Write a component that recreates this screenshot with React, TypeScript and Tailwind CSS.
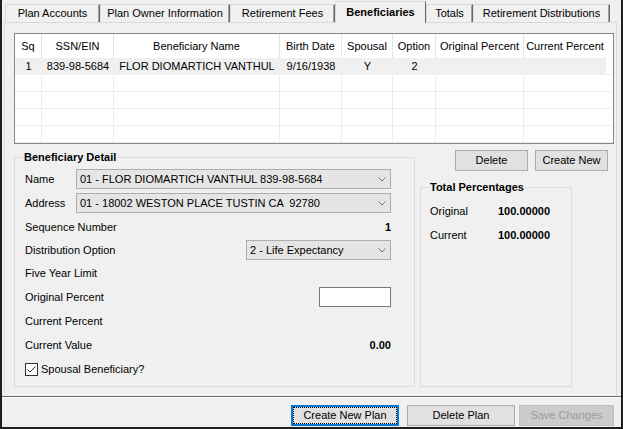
import React from 'react';

const tabs = [
  { label: 'Plan Accounts', cls: 'w-[95px]' },
  { label: 'Plan Owner Information', cls: 'w-[130px]' },
  { label: 'Retirement Fees', cls: 'w-[105px]' },
  { label: 'Beneficiaries', cls: 'w-[91px]', active: true },
  { label: 'Totals', cls: 'w-[47px]' },
  { label: 'Retirement Distributions', cls: 'w-[137px]' },
];

const columns = [
  { label: 'Sq', cls: 'w-[27px]' },
  { label: 'SSN/EIN', cls: 'w-[72px]' },
  { label: 'Beneficiary Name', cls: 'w-[166px]' },
  { label: 'Birth Date', cls: 'w-[62px]' },
  { label: 'Spousal', cls: 'w-[51px]' },
  { label: 'Option', cls: 'w-[43px]' },
  { label: 'Original Percent', cls: 'w-[88px]' },
  { label: 'Current Percent', cls: 'w-[82px]' },
];

const firstRow = ['1', '839-98-5684', 'FLOR DIOMARTICH VANTHUL', '9/16/1938', 'Y', '2', '', ''];

const Chevron = () => (
  <svg width="8" height="5" viewBox="0 0 8 5" className="shrink-0">
    <polyline points="0.5,0.5 4,4 7.5,0.5" fill="none" stroke="#707070" strokeWidth="1" />
  </svg>
);

const Combo = ({ text, cls }: { text: string; cls: string }) => (
  <div className={`${cls} h-[20px] flex items-center justify-between border border-[#adadad] bg-[#e5e5e5] pl-[3px] pr-[4px]`}>
    <span className="whitespace-pre">{text}</span>
    <Chevron />
  </div>
);

const TabStrip = () => (
  <div className="h-[22px] flex items-end pl-[3px]">
    {tabs.map((t) =>
      t.active ? (
        <div
          key={t.label}
          className={`${t.cls} relative z-10 -mb-px h-[22px] flex items-center justify-center pb-[1px] bg-[#f0f0f0] border-t border-l border-[#dadada] border-r border-r-[#696969] font-bold`}
        >
          {t.label}
        </div>
      ) : (
        <div
          key={t.label}
          className={`${t.cls} h-[18px] flex items-center justify-center bg-[#f0f0f0] border-t border-l border-[#dadada] border-r border-r-[#696969] shadow-[inset_-1px_0_0_#a0a0a0]`}
        >
          {t.label}
        </div>
      )
    )}
  </div>
);

const Grid = () => (
  <div className="ml-[9px] mt-[10px] w-[600px] h-[111px] border border-[#828790] bg-white overflow-hidden">
    <div className="h-[24px] flex">
      {columns.map((c, i) => (
        <div
          key={c.label}
          className={`${c.cls} h-full flex items-center justify-center ${i < columns.length - 1 ? 'border-r border-[#e5e5e5]' : ''}`}
        >
          {c.label}
        </div>
      ))}
    </div>
    <div className="h-[17px] flex">
      {columns.map((c, i) => (
        <div key={c.label} className={`${c.cls} h-full flex items-center justify-center bg-[#f0f0f0] whitespace-pre`}>
          {firstRow[i]}
        </div>
      ))}
      <div className="flex-1 h-full border-b border-[#ededed]" />
    </div>
    {[0, 1, 2, 3].map((r) => (
      <div key={r} className="h-[17px] flex">
        {columns.map((c, i) => (
          <div
            key={c.label}
            className={`${c.cls} h-full border-b border-[#ededed] ${i < columns.length - 1 ? 'border-r' : ''}`}
          />
        ))}
        <div className="flex-1 h-full border-b border-[#ededed]" />
      </div>
    ))}
  </div>
);

const Row = ({ h, children }: { h: string; children: React.ReactNode }) => (
  <div className={`${h} flex items-center justify-between`}>{children}</div>
);

const BeneficiaryDetail = () => (
  <fieldset className="mt-[7px] w-[401px] h-[236px] border border-[#dcdcdc] pl-[10px] pr-[23px] pt-[3px]">
    <legend className="-ml-[2px] px-[1px] font-bold">Beneficiary Detail</legend>
    <Row h="h-[24px]">
      <span className="w-[51px]">Name</span>
      <Combo text="01 - FLOR DIOMARTICH VANTHUL 839-98-5684" cls="flex-1" />
    </Row>
    <Row h="h-[24px]">
      <span className="w-[51px]">Address</span>
      <Combo text="01 - 18002 WESTON PLACE TUSTIN CA  92780" cls="flex-1" />
    </Row>
    <Row h="h-[24px]">
      <span>Sequence Number</span>
      <span className="font-bold">1</span>
    </Row>
    <Row h="h-[22px]">
      <span>Distribution Option</span>
      <Combo text="2 - Life Expectancy" cls="w-[145px]" />
    </Row>
    <Row h="h-[24px]">
      <span>Five Year Limit</span>
    </Row>
    <Row h="h-[24px]">
      <span>Original Percent</span>
      <div className="w-[72px] h-[20px] bg-white border border-[#7a7a7a]" />
    </Row>
    <Row h="h-[24px]">
      <span>Current Percent</span>
    </Row>
    <Row h="h-[24px]">
      <span>Current Value</span>
      <span className="font-bold">0.00</span>
    </Row>
    <div className="h-[24px] flex items-center gap-[3px]">
      <svg width="13" height="13" viewBox="0 0 13 13" className="shrink-0">
        <rect x="0.5" y="0.5" width="12" height="12" fill="white" stroke="#333333" />
        <polyline points="2.5,6.5 5,9 10.5,3.5" fill="none" stroke="#333333" strokeWidth="1" />
      </svg>
      <span>Spousal Beneficiary?</span>
    </div>
  </fieldset>
);

const TotalPercentages = () => (
  <fieldset className="mt-[10px] w-[152px] h-[206px] border border-[#dcdcdc] pl-[9px] pt-[5px]">
    <legend className="-ml-[1px] px-[1px] font-bold">Total Percentages</legend>
    <div className="h-[24px] flex items-center">
      <span className="w-[68px]">Original</span>
      <span className="font-bold">100.00000</span>
    </div>
    <div className="h-[24px] flex items-center">
      <span className="w-[68px]">Current</span>
      <span className="font-bold">100.00000</span>
    </div>
  </fieldset>
);

const Button = ({ label, cls }: { label: string; cls: string }) => (
  <button className={`${cls} h-[21px] flex items-center justify-center bg-[#e1e1e1] border border-[#adadad]`}>
    {label}
  </button>
);

export default function App() {
  return (
    <div className="w-[623px] h-[429px] bg-[#f0f0f0] border-x-2 border-b-2 border-[#1e1e1e] flex flex-col font-['Liberation_Sans',Arial,sans-serif] text-[11px] leading-[13px] text-black overflow-hidden">
      <TabStrip />
      <div className="flex-1 ml-[2px] mr-[4px] border-t border-x border-[#dadada]">
        <Grid />
        <div className="flex items-start ml-[9px]">
          <BeneficiaryDetail />
          <div className="ml-[5px] mt-[6px] w-[188px] flex flex-col">
            <div className="flex justify-end gap-[7px]">
              <Button label="Delete" cls="w-[73px]" />
              <Button label="Create New" cls="w-[73px]" />
            </div>
            <TotalPercentages />
          </div>
        </div>
      </div>
      <div className="h-[31px] border-t border-[#696969] shadow-[inset_0_1px_0_#ffffff] flex justify-end pt-[8px] pr-[7px]">
        <button className="w-[108px] h-[21px] border-2 border-[#0078d7] bg-[#e1e1e1]">
          <div className="w-full h-full flex items-center justify-center border border-dotted border-black">
            Create New Plan
          </div>
        </button>
        <Button label="Delete Plan" cls="ml-[8px] w-[108px]" />
        <button className="ml-[4px] w-[95px] h-[21px] flex items-center justify-center bg-[#cccccc] border border-[#bfbfbf] text-[#9a9a9a]">
          Save Changes
        </button>
      </div>
    </div>
  );
}
